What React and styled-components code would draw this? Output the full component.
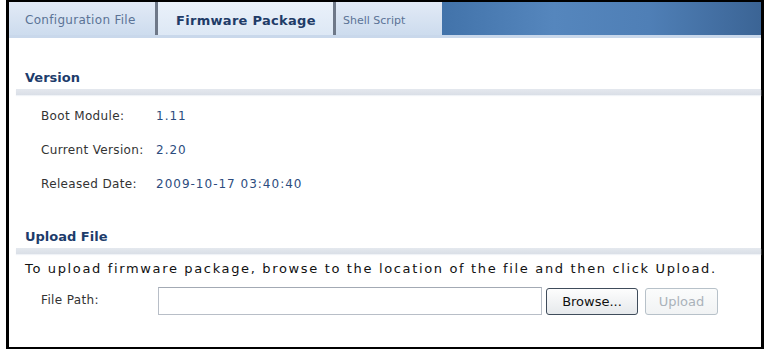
import React from "react";
import styled, { createGlobalStyle } from "styled-components";

const GlobalStyle = createGlobalStyle`
  body {
    margin: 0;
    background: #fff;
    font-family: "DejaVu Sans", Verdana, sans-serif;
  }
`;

const TABS = [
  { label: "Configuration File", width: 146, pad: 16, size: 12, spacing: 0.3, sep: true },
  { label: "Firmware Package", width: 175, pad: 18, size: 13, spacing: 0.3, sep: true, active: true },
  { label: "Shell Script", width: 106, pad: 7, size: 11, spacing: 0 },
];

const VERSION_ROWS = [
  { label: "Boot Module:", value: "1.11" },
  { label: "Current Version:", value: "2.20" },
  { label: "Released Date:", value: "2009-10-17 03:40:40" },
];

const App = () => {
  return (
    <>
      <GlobalStyle />
      <Frame>
        <TabBar>
          {TABS.map((t) => (
            <Tab
              key={t.label}
              $width={t.width}
              $pad={t.pad}
              $size={t.size}
              $spacing={t.spacing}
              $sep={t.sep}
              $active={t.active}
            >
              {t.label}
            </Tab>
          ))}
          <TabFill />
        </TabBar>

        <Section $top={32}>
          <Heading>Version</Heading>
          <Rule />
          <Rows>
            {VERSION_ROWS.map((r) => (
              <Row key={r.label}>
                <Label>{r.label}</Label>
                <Value>{r.value}</Value>
              </Row>
            ))}
          </Rows>
        </Section>

        <Section $top={28}>
          <Heading>Upload File</Heading>
          <Rule />
          <Note>To upload firmware package, browse to the location of the file and then click Upload.</Note>
          <FileRow>
            <Label>File Path:</Label>
            <PathInput type="text" />
            <Button>Browse...</Button>
            <Button disabled>Upload</Button>
          </FileRow>
        </Section>
      </Frame>
    </>
  );
};

export default App;

const Frame = styled.div`
  box-sizing: border-box;
  margin-left: 6px;
  width: 758px;
  height: 349px;
  border: 2px solid #000;
  border-left-width: 3px;
  border-right-width: 3px;
  background: #fff;
`;

const TabBar = styled.div`
  display: flex;
  height: 33px;
  border-bottom: 3px solid #c9d8eb;
`;

const Tab = styled.div`
  box-sizing: border-box;
  width: ${(p) => p.$width + (p.$sep ? 3 : 0)}px;
  padding-left: ${(p) => p.$pad}px;
  display: flex;
  align-items: center;
  padding-top: 3px;
  font-size: ${(p) => p.$size}px;
  letter-spacing: ${(p) => p.$spacing}px;
  font-weight: ${(p) => (p.$active ? "bold" : "normal")};
  color: ${(p) => (p.$active ? "#1f3c68" : "#5b7396")};
  white-space: nowrap;
  background: ${(p) =>
    p.$active
      ? "linear-gradient(#eaf1fa, #dde8f5)"
      : "linear-gradient(#e2eaf6, #cddcee)"};
  border-right: ${(p) => (p.$sep ? "3px solid #6e7888" : "none")};
`;

const TabFill = styled.div`
  flex: 1;
  background: linear-gradient(90deg, #4273aa 0%, #5586bd 35%, #4f7fb6 65%, #3b6495 100%);
`;

const Section = styled.div`
  margin-top: ${(p) => p.$top}px;
  padding-left: 7px;
`;

const Heading = styled.div`
  padding-left: 9px;
  font-size: 13px;
  line-height: 16px;
  font-weight: bold;
  color: #1d3c6b;
`;

const Rule = styled.div`
  margin-top: 3px;
  height: 6px;
  background: linear-gradient(#e4e8ee, #dadfe7);
  box-shadow: 0 1px 1px #f0f3f7;
`;

const Rows = styled.div`
  margin-top: 4px;
`;

const Row = styled.div`
  display: grid;
  grid-template-columns: 115px auto;
  align-items: center;
  height: 34px;
  padding-left: 25px;
`;

const Label = styled.span`
  color: #333;
  font-size: 12px;
  letter-spacing: 0.35px;
`;

const Value = styled.span`
  color: #2c4c7e;
  font-size: 12px;
  letter-spacing: 1px;
`;

const Note = styled.div`
  margin-top: 6px;
  padding-left: 9px;
  font-size: 13px;
  letter-spacing: 1.65px;
  line-height: 18px;
  color: #111;
  white-space: nowrap;
`;

const FileRow = styled.div`
  display: flex;
  align-items: center;
  margin-top: 9px;
  padding-left: 25px;
  & > ${Label} {
    width: 117px;
    margin-top: -3px;
  }
`;

const PathInput = styled.input`
  box-sizing: border-box;
  width: 384px;
  height: 28px;
  margin: 0 4px 0 0;
  border: 1px solid #b8bec7;
  border-top-color: #a3aab4;
  background: #fff;
`;

const Button = styled.button`
  box-sizing: border-box;
  height: 27px;
  margin: 0 7px 0 0;
  padding: 0 10px;
  border-radius: 3px;
  font-family: "DejaVu Sans", Verdana, sans-serif;
  font-size: 13px;
  color: #111;
  border: 1px solid #3f4c5b;
  background: linear-gradient(#fdfdfd, #e6e9ec);
  &:disabled {
    width: 73px;
    color: #aab2ba;
    border-color: #b7c1c9;
    background: linear-gradient(#fbfcfc, #f1f3f4);
  }
  &:not(:disabled) {
    width: 92px;
  }
`;
